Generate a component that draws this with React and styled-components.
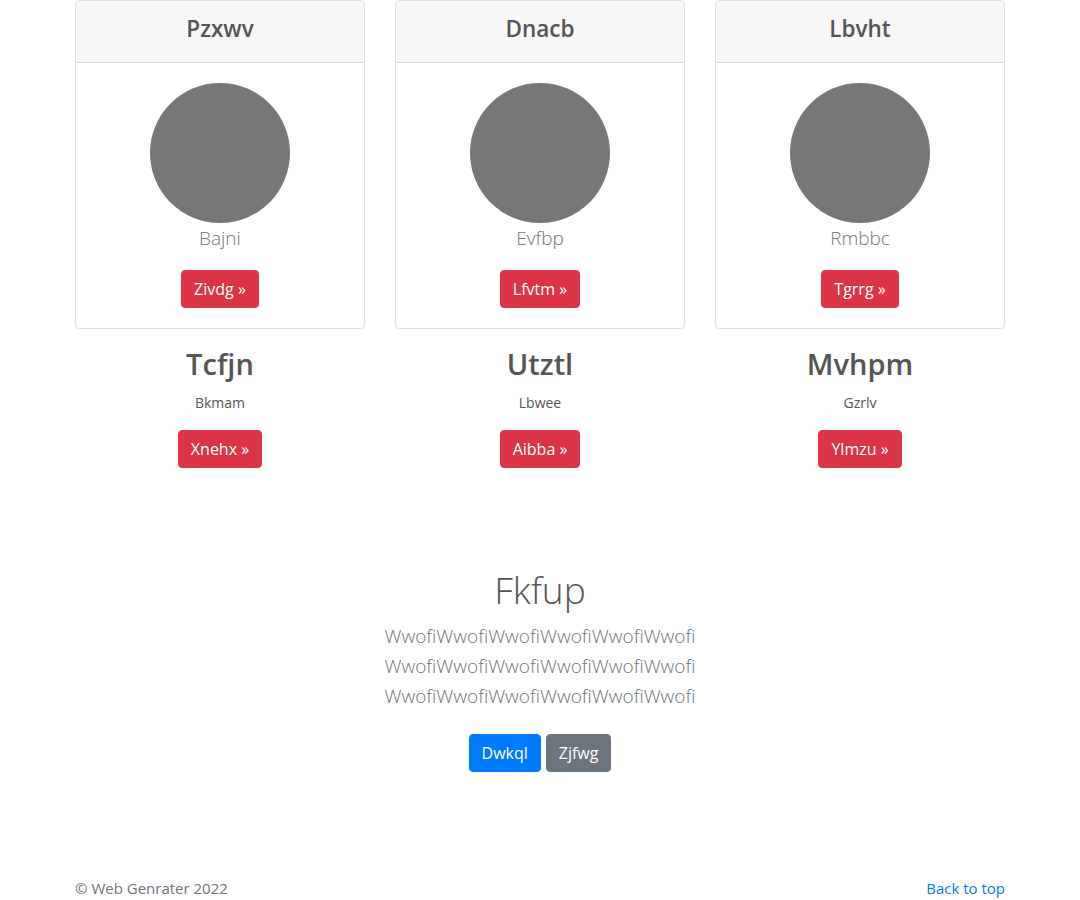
import React from "react";
import styled, { createGlobalStyle } from "styled-components";

const GlobalStyle = createGlobalStyle`
  *, *::before, *::after { box-sizing: border-box; }
  body {
    margin: 0;
    background: #fff;
    color: #555;
    font-family: "Open Sans", "Noto Sans", Arial, sans-serif;
  }
`;

const Container = styled.div`
  max-width: 960px;
  margin: 0 auto;
  padding: 0 15px;
`;

const Grid = styled.div`
  display: grid;
  grid-template-columns: repeat(3, 1fr);
  column-gap: 30px;
  margin-top: ${(p) => p.$top || 0}px;
`;

const Card = styled.div`
  border: 1px solid rgba(0, 0, 0, 0.125);
  border-radius: 4px;
  overflow: hidden;
  text-align: center;
`;

const CardHeader = styled.div`
  background: #f7f7f7;
  border-bottom: 1px solid rgba(0, 0, 0, 0.125);
  padding: 9px 20px 15px;
`;

const CardTitle = styled.h4`
  margin: 0;
  font-size: 22.5px;
  line-height: 37px;
  font-weight: 600;
  color: #555;
`;

const CardBody = styled.div`
  padding: 20px;
  display: flex;
  flex-direction: column;
  align-items: center;
`;

const Avatar = styled.div`
  width: 140px;
  height: 140px;
  border-radius: 50%;
  background: #777;
`;

const Name = styled.p`
  margin: 0 0 16px;
  font-size: 19px;
  line-height: 31px;
  font-weight: 300;
  color: #6c757d;
`;

const colors = {
  danger: "#dc3545",
  primary: "#007bff",
  secondary: "#6c757d",
};

const Button = styled.a`
  display: inline-block;
  padding: 6px 12px;
  font-size: ${(p) => p.$fs || 16}px;
  line-height: 24px;
  height: 38px;
  border-radius: 4px;
  border: 1px solid ${(p) => colors[p.$variant]};
  background: ${(p) => colors[p.$variant]};
  color: #fff;
  text-decoration: none;
  cursor: pointer;
`;

const Feature = styled.div`
  text-align: center;
`;

const FeatureTitle = styled.h2`
  margin: 0 0 9px;
  font-size: 29px;
  line-height: 38px;
  font-weight: 600;
  color: #555;
`;

const FeatureText = styled.p`
  margin: 0 0 16px;
  font-size: 14px;
  line-height: 22px;
  color: #555;
`;

const Jumbo = styled.section`
  margin-top: 98px;
  text-align: center;
`;

const JumboTitle = styled.h1`
  margin: 0 0 7px;
  font-size: 37px;
  line-height: 48px;
  font-weight: 300;
  color: #555;
`;

const Lead = styled.p`
  margin: 0 0 23px;
  font-size: 19px;
  line-height: 30px;
  font-weight: 300;
  color: #6c757d;
`;

const LeadLine = styled.span`
  display: block;
`;

const ButtonRow = styled.div`
  display: flex;
  justify-content: center;
  gap: 5px;
`;

const Footer = styled.footer`
  margin-top: 104px;
  display: flex;
  justify-content: space-between;
  font-size: 15px;
  line-height: 24px;
  color: #6c757d;
`;

const Link = styled.a`
  color: #007bff;
  text-decoration: none;
`;

const cards = [
  { title: "Pzxwv", name: "Bajni", btn: "Zivdg" },
  { title: "Dnacb", name: "Evfbp", btn: "Lfvtm" },
  { title: "Lbvht", name: "Rmbbc", btn: "Tgrrg" },
];

const features = [
  { title: "Tcfjn", text: "Bkmam", btn: "Xnehx" },
  { title: "Utztl", text: "Lbwee", btn: "Aibba" },
  { title: "Mvhpm", text: "Gzrlv", btn: "Ylmzu" },
];

const line = "WwofiWwofiWwofiWwofiWwofiWwofi";

export default function App() {
  return (
    <>
      <GlobalStyle />
      <Container>
        <Grid>
          {cards.map((c) => (
            <Card key={c.title}>
              <CardHeader>
                <CardTitle>{c.title}</CardTitle>
              </CardHeader>
              <CardBody>
                <Avatar />
                <Name>{c.name}</Name>
                <Button $variant="danger" $fs={16}>
                  {c.btn} »
                </Button>
              </CardBody>
            </Card>
          ))}
        </Grid>
        <Grid $top={16}>
          {features.map((f) => (
            <Feature key={f.title}>
              <FeatureTitle>{f.title}</FeatureTitle>
              <FeatureText>{f.text}</FeatureText>
              <Button $variant="danger">{f.btn} »</Button>
            </Feature>
          ))}
        </Grid>
        <Jumbo>
          <JumboTitle>Fkfup</JumboTitle>
          <Lead>
            <LeadLine>{line}</LeadLine>
            <LeadLine>{line}</LeadLine>
            <LeadLine>{line}</LeadLine>
          </Lead>
          <ButtonRow>
            <Button $variant="primary">Dwkql</Button>
            <Button $variant="secondary">Zjfwg</Button>
          </ButtonRow>
        </Jumbo>
        <Footer>
          <span>© Web Genrater 2022</span>
          <Link href="#">Back to top</Link>
        </Footer>
      </Container>
    </>
  );
}
